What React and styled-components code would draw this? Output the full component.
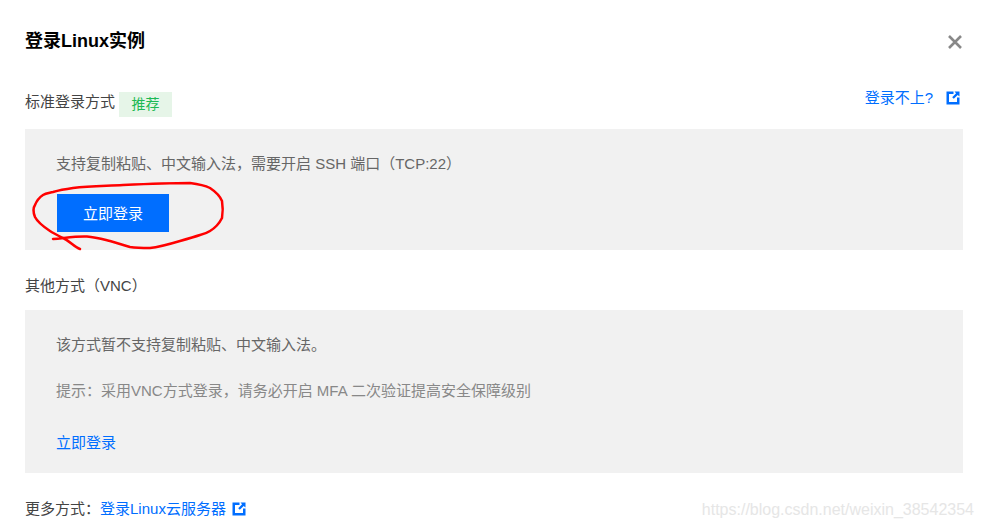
import styled, { createGlobalStyle } from "styled-components";

const GlobalStyle = createGlobalStyle`
  html, body {
    margin: 0;
    background: #fff;
  }
  body {
    font-family: "Liberation Sans", "Noto Sans CJK SC", sans-serif;
    font-size: 15px;
    color: #444;
    overflow: hidden;
  }
`;

const Dialog = styled.div`
  position: relative;
  width: 983px;
  height: 528px;
  padding: 29px 20px 0 25px;
  box-sizing: border-box;
`;

const Header = styled.div`
  display: flex;
  justify-content: space-between;
  align-items: center;
  height: 24px;
`;

const Title = styled.h2`
  margin: 0;
  font-size: 18px;
  line-height: 24px;
  font-weight: 700;
  color: #000;
`;

const CloseButton = styled.button`
  display: flex;
  width: 18px;
  height: 18px;
  padding: 0;
  margin: 2px 0 0 0;
  border: 0;
  background: none;
  transform: translateX(1px);
`;

const SectionHead = styled.div`
  display: flex;
  justify-content: space-between;
  align-items: center;
  height: 25px;
  margin-top: ${(p) => p.$top}px;
`;

const Label = styled.div`
  display: flex;
  align-items: center;
  line-height: 20px;
`;

const Tag = styled.span`
  display: inline-block;
  width: 53px;
  height: 25px;
  margin: 5px 0 0 4px;
  line-height: 25px;
  text-align: center;
  font-size: 14px;
  color: #1db954;
  background: #e6f5e8;
`;

const HelpLink = styled.a`
  display: flex;
  align-items: center;
  color: #006eff;
  line-height: 20px;
  margin: 0 3px 8px 0;
`;

const Panel = styled.div`
  width: 938px;
  height: ${(p) => p.$height}px;
  margin-top: ${(p) => p.$top}px;
  padding: ${(p) => p.$pad}px 32px 0;
  box-sizing: border-box;
  background: #f1f1f1;
`;

const Line = styled.p`
  margin: 0 0 ${(p) => p.$after || 0}px -1px;
  line-height: 20px;
  color: ${(p) => (p.$muted ? "#888" : "#666")};
`;

const LoginButton = styled.button`
  display: block;
  width: 112px;
  height: 38px;
  padding: 2px 0 0;
  border: 0;
  font: inherit;
  line-height: 36px;
  color: #fff;
  background: #006eff;
`;

const TextLink = styled.a`
  color: #006eff;
  line-height: 20px;
`;

const PanelLink = styled(TextLink)`
  margin-left: -1px;
`;

const Footer = styled.div`
  display: flex;
  align-items: center;
  height: 20px;
  margin-top: 26px;
  line-height: 20px;
`;

const Scribble = styled.svg`
  position: absolute;
  left: 0;
  top: 0;
  pointer-events: none;
`;

const Watermark = styled.span`
  position: absolute;
  right: 9px;
  top: 500px;
  font-size: 16px;
  line-height: 20px;
  color: #e6e6e6;
`;

const ExternalIcon = ({ gap }) => (
  <svg width="14" height="14" viewBox="0 0 14 14" style={{ marginLeft: gap }}>
    <path d="M0.500 0.500H7.500V3H3V11H11V6.500H13.500V13.500H0.500z" fill="#006eff" />
    <path d="M8.500 0.500H13.500V5.500L11.700 3.900 7.800 7.800 6.200 6.200 10.100 2.300z" fill="#006eff" />
  </svg>
);

export default function App() {
  return (
    <Dialog>
      <GlobalStyle />
      <Header>
        <Title>登录Linux实例</Title>
        <CloseButton aria-label="关闭">
          <svg width="18" height="18" viewBox="0 0 18 18">
            <path d="M3 3l12 12M15 3L3 15" stroke="#888" strokeWidth="2.600" fill="none" />
          </svg>
        </CloseButton>
      </Header>
      <SectionHead $top={36}>
        <Label>
          标准登录方式
          <Tag>推荐</Tag>
        </Label>
        <HelpLink>
          登录不上?
          <ExternalIcon gap={13} />
        </HelpLink>
      </SectionHead>
      <Panel $height={121} $top={15} $pad={25}>
        <Line $after={20}>支持复制粘贴、中文输入法，需要开启 SSH 端口（TCP:22）</Line>
        <LoginButton>立即登录</LoginButton>
      </Panel>
      <SectionHead $top={23}>
        <Label>其他方式（VNC）</Label>
      </SectionHead>
      <Panel $height={163} $top={12} $pad={25}>
        <Line $after={26}>该方式暂不支持复制粘贴、中文输入法。</Line>
        <Line $muted $after={32}>提示：采用VNC方式登录，请务必开启 MFA 二次验证提高安全保障级别</Line>
        <PanelLink>立即登录</PanelLink>
      </Panel>
      <Footer>
        更多方式：
        <TextLink>登录Linux云服务器</TextLink>
        <ExternalIcon gap={6} />
      </Footer>
      <Scribble width="983" height="528" viewBox="0 0 983 528">
        <path
          d="M80 249C74 247 70 241 63 238C57 235 53 233 50 231C44 227 38 223 35 217C33 212 33 208 35 205C37 200 40 197 43 195C46 193 49 193 53 192C60 190 66 189 73 188C90 186 106 186 123 185C145 184 168 183 190 183C198 184 204 185 210 188C216 192 220 196 222 201C223 207 223 212 222 218C219 224 215 228 210 231C207 233 204 234 200 235C194 237 187 239 180 241C170 244 160 247 150 248C143 248 137 248 130 247C123 245 117 243 110 241C102 239 95 237 87 236.500C76 236 65 238 53 239"
          fill="none"
          stroke="#f00"
          strokeWidth="2.500"
          strokeLinecap="round"
          strokeLinejoin="round"
        />
      </Scribble>
      <Watermark>https://blog.csdn.net/weixin_38542354</Watermark>
    </Dialog>
  );
}
